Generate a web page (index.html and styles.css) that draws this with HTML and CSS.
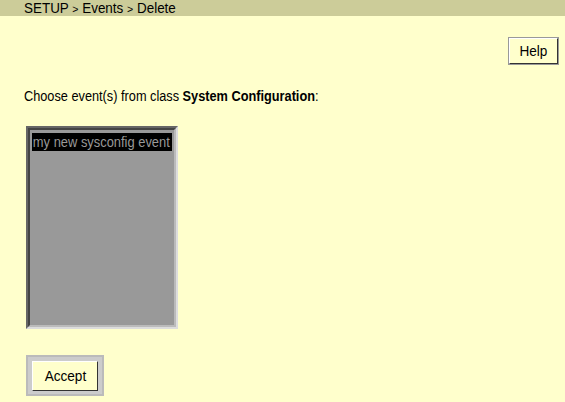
FILE: index.html
```html
<!DOCTYPE html>
<html>
<head>
<meta charset="utf-8">
<link rel="stylesheet" href="styles.css">
</head>
<body>
<div class="crumb"><span class="cond">SETUP <span class="gt">&gt;</span> Events <span class="gt">&gt;</span> Delete</span></div>
<div class="toolbar"><button class="btn help"><span class="cond">Help</span></button></div>
<p class="prompt"><span class="cond">Choose event(s) from class <b>System Configuration</b>:</span></p>
<div class="listbox">
  <div class="listinner">
    <div class="item sel"><span class="cond">my new sysconfig event</span></div>
  </div>
</div>
<div class="accept-wrap"><button class="btn accept"><span class="cond">Accept</span></button></div>
</body>
</html>
```
FILE: styles.css
```css
html, body { margin: 0; padding: 0; }
body {
  background: #ffffcc;
  font-family: "Liberation Sans", Arial, sans-serif;
  font-size: 14px;
  color: #000;
  width: 565px;
  height: 402px;
  overflow: hidden;
}
.cond {
  display: inline-block;
  transform: scaleX(0.91);
  transform-origin: left center;
  white-space: nowrap;
}
.crumb {
  background: #cccc99;
  height: 16px;
  line-height: 16px;
  padding-left: 24px;
  font-size: 14px;
  color: #000;
}
.crumb .cond { transform: scaleX(0.96); }
.gt { font-size: 11px; }
.toolbar {
  display: flex;
  justify-content: flex-end;
  padding: 22px 7px 0 0;
}
.btn {
  font-family: "Liberation Sans", Arial, sans-serif;
  font-size: 14px;
  background: #ffffcc;
  color: #000;
  border: 1px solid;
  border-color: #fff #333 #333 #fff;
  outline: 1px solid #999;
  padding: 0;
}
.btn .cond { transform: scaleX(0.97); transform-origin: center center; }
.help { width: 49px; height: 26px; }
.prompt {
  margin: 24px 0 0 24px;
  font-size: 14px;
  line-height: 16px;
}
.listbox {
  margin: 22px 0 0 26px;
  width: 148px;
  height: 199px;
  border: 2px solid;
  border-color: #666 #ddd #ddd #666;
  background: #999;
}
.listinner {
  height: 100%;
  box-sizing: border-box;
  border: 2px solid;
  border-color: #444 #bbb #bbb #444;
  padding: 3px 2px;
}
.item {
  font-size: 15px;
  line-height: 18px;
  height: 18px;
  white-space: nowrap;
  color: #999;
  overflow: hidden;
}
.item .cond { transform: scaleX(0.86); padding-left: 1px; }
.sel { background: #000; }
.accept-wrap {
  margin: 26px 0 0 26px;
  width: 74px;
  height: 37px;
  border: 2px solid #bbb;
  background: #ccc;
  display: flex;
  align-items: center;
  justify-content: center;
}
.accept { width: 66px; height: 30px; outline: none; border-color: #fff #333 #333 #fff; }
```
